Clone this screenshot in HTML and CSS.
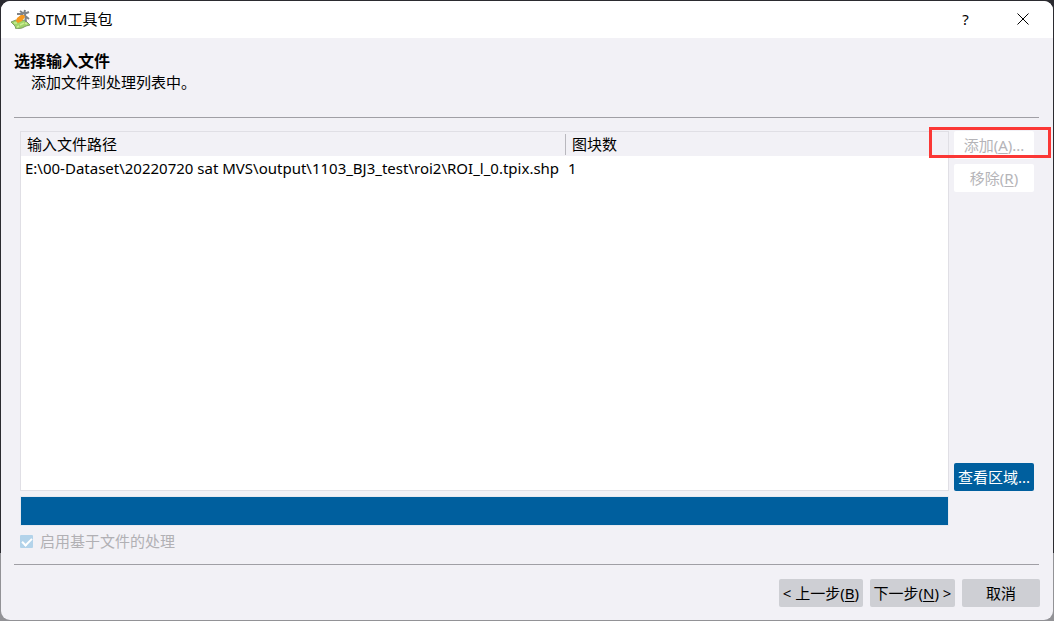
FILE: index.html
```html
<!DOCTYPE html>
<html lang="zh-CN">
<head>
<meta charset="utf-8">
<title>DTM工具包</title>
<link rel="stylesheet" href="styles.css">
</head>
<body>
<div class="window">
  <header class="titlebar">
    <svg class="app-icon" viewBox="0 0 20 20" aria-hidden="true">
      <path d="M1 13l5-2 3 1 6-1 5 5-4 1-4 2-6 1-1-3z" fill="#a0d468" stroke="#7f9c66"/>
      <path d="M4 14l3 0M10 16l4-2M7 18l2-1M15 14l2 1" stroke="#caec93" stroke-width="1.500"/>
      <path d="M14 5l-4-3M14 5l1-4M14 5l5-2M14 6l5 4M13 5l-6 0M15 5l1 8M13 6l-4 3" stroke="#808488" stroke-width="2" fill="none"/>
      <path d="M6 12l1-3 4-3 3 0 1 2-3 4-4 2z" fill="#f7981d"/>
    </svg>
    <h1 class="window-title">DTM工具包</h1>
    <button class="caption-button" type="button" aria-label="帮助">?</button>
    <button class="caption-button" type="button" aria-label="关闭">
      <svg class="close-icon" viewBox="0 0 12 12" aria-hidden="true"><path d="M0.500 0.500l11 11M11.500 0.500l-11 11"/></svg>
    </button>
  </header>
  <section class="intro">
    <h2 class="intro-title">选择输入文件</h2>
    <p class="intro-text">添加文件到处理列表中。</p>
  </section>
  <main class="content">
    <div class="file-list">
      <table class="files">
        <colgroup><col class="path-column"><col></colgroup>
        <thead><tr><th scope="col">输入文件路径</th><th scope="col">图块数</th></tr></thead>
        <tbody><tr><td>E:\00-Dataset\20220720 sat MVS\output\1103_BJ3_test\roi2\ROI_l_0.tpix.shp</td><td>1</td></tr></tbody>
      </table>
    </div>
    <div class="actions">
      <div class="highlighted">
        <button class="button disabled" type="button" disabled>添加(<u>A</u>)...</button>
      </div>
      <button class="button disabled" type="button" disabled>移除(<u>R</u>)</button>
      <button class="button primary" type="button">查看区域...</button>
    </div>
    <div class="progress" role="progressbar" aria-label="处理进度" aria-valuenow="100"></div>
    <label class="option">
      <input class="checkbox" type="checkbox" checked disabled>
      <span>启用基于文件的处理</span>
    </label>
  </main>
  <footer class="footer">
    <button class="button back" type="button">&lt; 上一步(<u>B</u>)</button>
    <button class="button next" type="button">下一步(<u>N</u>) &gt;</button>
    <button class="button cancel" type="button">取消</button>
  </footer>
</div>
</body>
</html>
```
FILE: styles.css
```css
* {
  box-sizing: border-box;
}

body {
  min-height: 100vh;
  margin: 0;
  padding: 1px;
  display: flex;
  background: linear-gradient(#2b2b30 0 89%, #929296 89%);
  color: #000;
  font: 15px/22px "Noto Sans", "Noto Sans CJK SC", sans-serif;
}

button {
  font: inherit;
}

.window {
  flex: 1;
  min-width: 0;
  display: flex;
  flex-direction: column;
  border-radius: 9px;
  background: #f2f1f6;
  overflow: hidden;
}

.titlebar {
  height: 37px;
  flex: none;
  display: flex;
  align-items: center;
  padding: 0 2px 2px 9px;
  background: #fff;
}

.app-icon {
  width: 20px;
  height: 20px;
  margin-right: 5px;
}

.window-title {
  flex: 1;
  margin: 0;
  font-size: 15px;
  font-weight: 400;
}

.caption-button {
  width: 57px;
  height: 35px;
  padding: 0;
  border: 0;
  background: none;
  color: #000;
}

.close-icon {
  display: block;
  width: 12px;
  height: 12px;
  margin: 0 auto;
  stroke: #000;
  fill: none;
}

.intro {
  margin: 0 14px 0 13px;
  padding: 12px 0 24px;
  border-bottom: 1px solid #a09fa5;
}

.intro-title {
  margin: 0;
  font-size: 16px;
  line-height: 22px;
}

.intro-text {
  margin: 0;
  padding-left: 17px;
  line-height: 21px;
}

.content {
  flex: 1;
  display: grid;
  grid-template-columns: minmax(0, 1fr) 80px;
  grid-template-rows: 1fr 30px auto;
  column-gap: 5px;
  row-gap: 5px;
  margin: 0 14px 0 13px;
  padding: 13px 5px 12px 6px;
  border-bottom: 1px solid #a09fa5;
}

.file-list {
  border: 1px solid #e0dfe5;
  background: #fff;
}

.files {
  width: 100%;
  table-layout: fixed;
  border-collapse: separate;
  border-spacing: 0;
  white-space: nowrap;
}

.path-column {
  width: 545px;
}

.files th {
  height: 24px;
  padding: 0 6px;
  background: #f2f1f6;
  font-weight: 400;
  text-align: left;
}

.files th:first-child {
  background: linear-gradient(#b9b8be, #b9b8be) right center / 1px 21px no-repeat #f2f1f6;
}

.files td {
  height: 24px;
  padding: 0 2px 0 4px;
}

.files td + td {
  padding-left: 2px;
}

.actions {
  display: flex;
  flex-direction: column;
  gap: 5px;
}

.highlighted {
  position: relative;
  display: flex;
}

.highlighted::after {
  content: "";
  position: absolute;
  inset: -4px -17px 1px -25px;
  border: 3px solid #fb3735;
  pointer-events: none;
}

.button {
  width: 80px;
  height: 28px;
  padding: 0;
  border: 0;
  border-radius: 2px;
  background: #cecfd4;
  color: #000;
  line-height: 28px;
  white-space: nowrap;
}

.button u {
  text-underline-offset: 2px;
}

.disabled {
  background: #fff;
  color: #b5b4b8;
}

.primary {
  margin-top: auto;
  background: #005f9e;
  color: #fff;
}

.progress {
  border: 1px solid #e6e9f0;
  background: #005f9e;
}

.option {
  grid-column: 1 / -1;
  justify-self: start;
  display: flex;
  align-items: center;
  gap: 7px;
  line-height: 21px;
  color: #b1b0b4;
}

.checkbox {
  appearance: none;
  width: 13px;
  height: 13px;
  margin: 0;
  display: grid;
  place-items: center;
  border-radius: 1px;
  background: #b3d3ea;
}

.checkbox::before {
  content: "";
  width: 8px;
  height: 4px;
  border: solid #fff;
  border-width: 0 0 2px 2px;
  transform: translateY(-1px) rotate(-45deg);
}

.footer {
  display: flex;
  justify-content: flex-end;
  gap: 7px;
  padding: 14px 13px 13px;
}

.back {
  width: 84px;
}

.next {
  width: 85px;
}

.cancel {
  width: 78px;
}
```
